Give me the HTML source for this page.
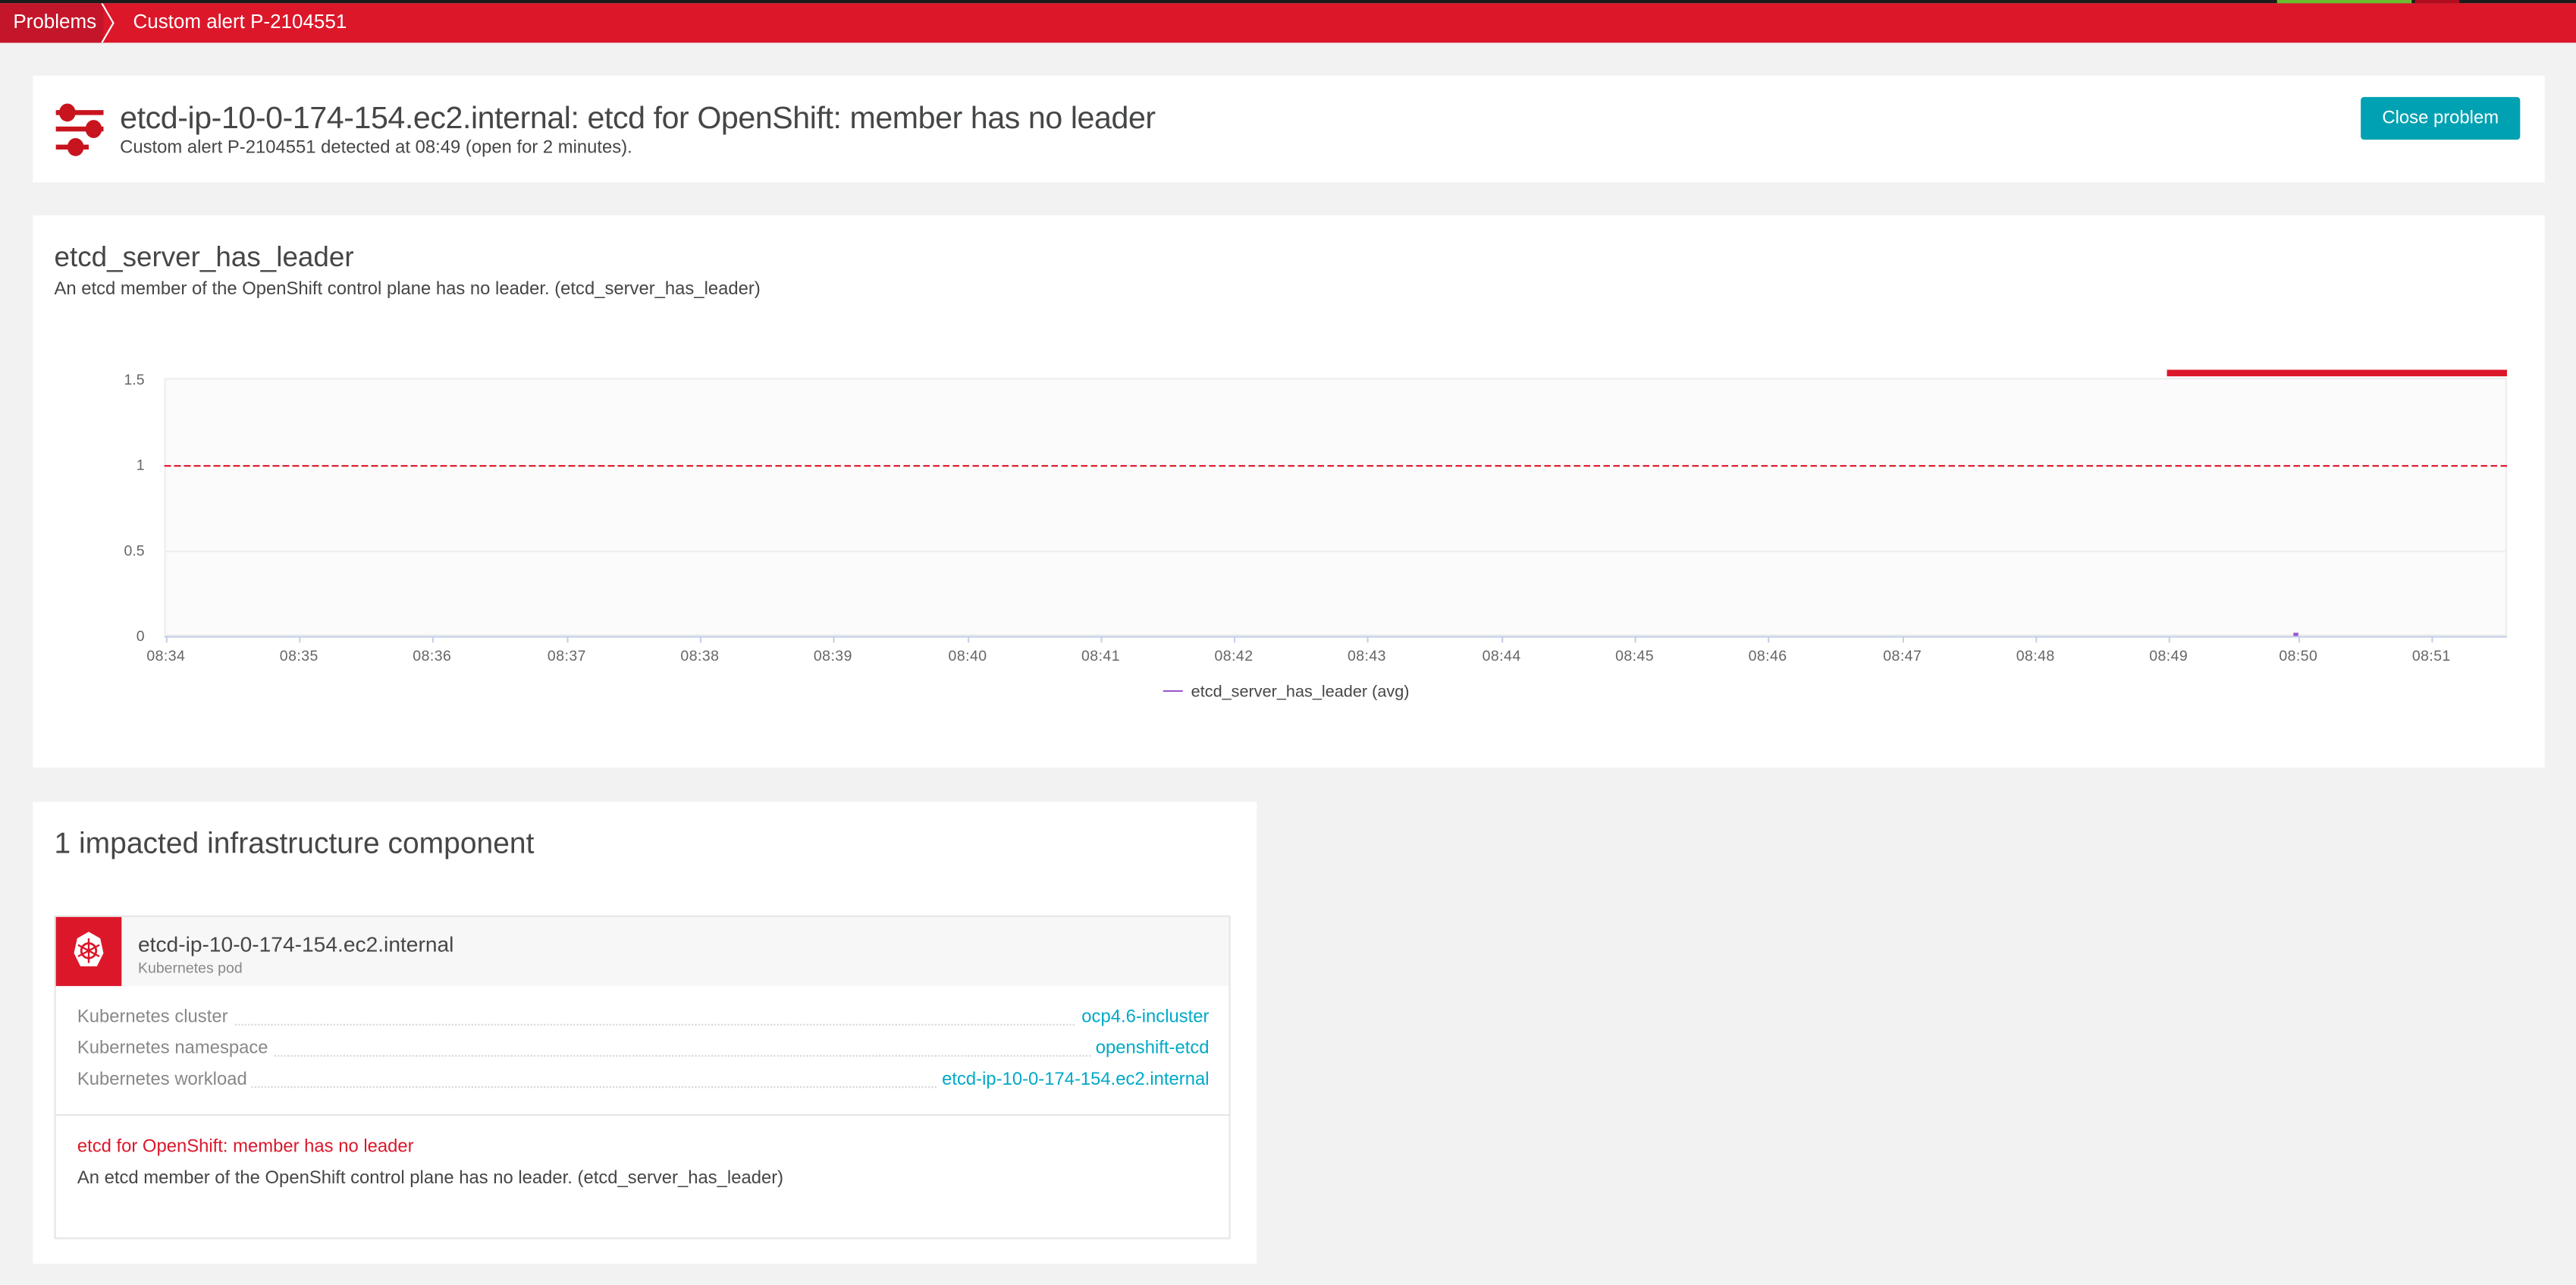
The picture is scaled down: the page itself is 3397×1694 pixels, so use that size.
<!DOCTYPE html>
<html><head><meta charset="utf-8"><style>
html,body{margin:0;padding:0;width:3397px;height:1694px;overflow:hidden;background:#f2f2f2;}
#w{position:absolute;left:0;top:0;width:1568px;height:782px;transform:scale(2.16645);transform-origin:0 0;font-family:"Liberation Sans",sans-serif;color:#454646;background:#f2f2f2;}
.a{position:absolute;white-space:nowrap;}
.card{position:absolute;background:#fff;}
.yl{position:absolute;font-size:9px;color:#666;right:1480px;width:30px;text-align:right;}
.xl{position:absolute;font-size:9px;color:#666;top:394px;width:40px;margin-left:-20px;text-align:center;letter-spacing:.2px;}
.tick{position:absolute;top:387px;width:1px;height:4px;background:#c5d0e6;}
.row{position:absolute;left:47px;width:689px;height:14px;font-size:11px;}
.row .l{position:absolute;left:0;color:#888;background:#fff;padding-right:3px;}
.row .v{position:absolute;right:0;color:#00a9c7;background:#fff;padding-left:3px;}
.row .d{position:absolute;left:0;right:0;top:10px;border-bottom:1px dotted #d8d8d8;}
</style></head><body><div id="w">
<div class="a" style="left:0;top:0;width:1568px;height:2px;background:#1b1b1b"></div>
<div class="a" style="left:0;top:2px;width:1568px;height:24px;background:#dc172a"></div>
<div class="a" style="left:0;top:2px;width:63px;height:24px;background:#c4162a"></div>
<svg class="a" style="left:60px;top:2px" width="12" height="24"><polyline points="2,0 9,12 2,24" fill="none" stroke="#fff" stroke-width="1"/></svg>
<div class="a" style="left:1386px;top:0;width:82px;height:2px;background:#6bbd2f"></div>
<div class="a" style="left:1470px;top:0;width:27px;height:2px;background:#b00e1e"></div>
<div class="a" style="left:8px;top:6px;font-size:12px;color:#fff">Problems</div>
<div class="a" style="left:81px;top:6px;font-size:12px;color:#fff">Custom alert P-2104551</div>

<div class="card" style="left:20px;top:46px;width:1529px;height:65px"></div>
<svg class="a" style="left:32px;top:62px" width="34" height="34">
<rect x="2" y="5" width="29" height="3" fill="#c8141f"/><ellipse cx="9" cy="6.5" rx="5" ry="5.5" fill="#c8141f"/>
<rect x="2" y="15" width="29" height="3" fill="#c8141f"/><ellipse cx="25" cy="16.5" rx="5" ry="5.5" fill="#c8141f"/>
<rect x="2" y="26" width="20" height="3" fill="#c8141f"/><ellipse cx="14" cy="27.5" rx="5" ry="5.5" fill="#c8141f"/>
</svg>
<div class="a" style="left:73px;top:62px;font-size:19px;color:#454646;letter-spacing:-.2px">etcd-ip-10-0-174-154.ec2.internal: etcd for OpenShift: member has no leader</div>
<div class="a" style="left:73px;top:84px;font-size:11px;color:#454646">Custom alert P-2104551 detected at 08:49 (open for 2 minutes).</div>
<div class="a" style="left:1437px;top:59px;width:97px;height:26px;background:#00a1b2;border-radius:2px;color:#fff;font-size:11px;text-align:center;line-height:27px">Close problem</div>

<div class="card" style="left:20px;top:131px;width:1529px;height:336px"></div>
<div class="a" style="left:33px;top:147px;font-size:17px">etcd_server_has_leader</div>
<div class="a" style="left:33px;top:170px;font-size:11px">An etcd member of the OpenShift control plane has no leader. (etcd_server_has_leader)</div>
<div class="a" style="left:100px;top:230px;width:1426px;height:157px;background:#fbfbfb;border:1px solid #eee;box-sizing:border-box"></div>
<div class="a" style="left:100px;top:335px;width:1426px;height:1px;background:#eee"></div>
<div class="a" style="left:100px;top:283px;width:1426px;height:1px;background:repeating-linear-gradient(90deg,#dc172a 0 4px,transparent 4px 6px)"></div>
<div class="a" style="left:1319px;top:225px;width:207px;height:4px;background:#dc172a"></div>
<div class="a" style="left:100px;top:387px;width:1426px;height:1px;background:#c5d0e6"></div>
<div class="a" style="left:1396px;top:385px;width:3px;height:2px;background:#9b59d0"></div>
<div class="yl" style="top:226px">1.5</div><div class="yl" style="top:278px">1</div><div class="yl" style="top:330px">0.5</div><div class="yl" style="top:382px">0</div>
<div class="tick" style="left:101px"></div><div class="xl" style="left:101px">08:34</div>
<div class="tick" style="left:182px"></div><div class="xl" style="left:182px">08:35</div>
<div class="tick" style="left:263px"></div><div class="xl" style="left:263px">08:36</div>
<div class="tick" style="left:345px"></div><div class="xl" style="left:345px">08:37</div>
<div class="tick" style="left:426px"></div><div class="xl" style="left:426px">08:38</div>
<div class="tick" style="left:507px"></div><div class="xl" style="left:507px">08:39</div>
<div class="tick" style="left:589px"></div><div class="xl" style="left:589px">08:40</div>
<div class="tick" style="left:670px"></div><div class="xl" style="left:670px">08:41</div>
<div class="tick" style="left:751px"></div><div class="xl" style="left:751px">08:42</div>
<div class="tick" style="left:832px"></div><div class="xl" style="left:832px">08:43</div>
<div class="tick" style="left:914px"></div><div class="xl" style="left:914px">08:44</div>
<div class="tick" style="left:995px"></div><div class="xl" style="left:995px">08:45</div>
<div class="tick" style="left:1076px"></div><div class="xl" style="left:1076px">08:46</div>
<div class="tick" style="left:1158px"></div><div class="xl" style="left:1158px">08:47</div>
<div class="tick" style="left:1239px"></div><div class="xl" style="left:1239px">08:48</div>
<div class="tick" style="left:1320px"></div><div class="xl" style="left:1320px">08:49</div>
<div class="tick" style="left:1399px"></div><div class="xl" style="left:1399px">08:50</div>
<div class="tick" style="left:1480px"></div><div class="xl" style="left:1480px">08:51</div>
<div class="a" style="left:708px;top:420px;width:12px;height:1px;background:#9b59d0"></div>
<div class="a" style="left:725px;top:416px;font-size:10px;color:#454646">etcd_server_has_leader (avg)</div>

<div class="card" style="left:20px;top:488px;width:745px;height:281px"></div>
<div class="a" style="left:33px;top:503px;font-size:18px">1 impacted infrastructure component</div>
<div class="a" style="left:33px;top:557px;width:716px;height:197px;border:1px solid #e6e6e6;box-sizing:border-box;background:#fff"></div>
<div class="a" style="left:34px;top:558px;width:714px;height:42px;background:#f7f7f7"></div>
<div class="a" style="left:34px;top:558px;width:40px;height:42px;background:#dc172a"></div>
<svg class="a" style="left:44px;top:566px" width="20" height="26" viewBox="0 0 20 26">
<polygon points="10,1 17,5 19,14 15,22 5,22 1,14 3,5" fill="#fff"/>
<circle cx="10" cy="12.5" r="4.5" fill="none" stroke="#dc172a" stroke-width="1.3"/>
<g stroke="#dc172a" stroke-width="1.1"><line x1="10" y1="5" x2="10" y2="20"/><line x1="3.5" y1="9" x2="16.5" y2="16"/><line x1="16.5" y1="9" x2="3.5" y2="16"/></g>
<circle cx="10" cy="12.5" r="1.3" fill="#dc172a"/>
</svg>
<div class="a" style="left:84px;top:567px;font-size:13px;color:#454646">etcd-ip-10-0-174-154.ec2.internal</div>
<div class="a" style="left:84px;top:584px;font-size:9px;color:#888">Kubernetes pod</div>
<div class="row" style="top:613px"><div class="d"></div><span class="l">Kubernetes cluster</span><span class="v">ocp4.6-incluster</span></div>
<div class="row" style="top:632px"><div class="d"></div><span class="l">Kubernetes namespace</span><span class="v">openshift-etcd</span></div>
<div class="row" style="top:651px"><div class="d"></div><span class="l">Kubernetes workload</span><span class="v">etcd-ip-10-0-174-154.ec2.internal</span></div>
<div class="a" style="left:34px;top:678px;width:714px;height:1px;background:#e6e6e6"></div>
<div class="a" style="left:47px;top:692px;font-size:11px;color:#dc172a">etcd for OpenShift: member has no leader</div>
<div class="a" style="left:47px;top:711px;font-size:11px;color:#454646">An etcd member of the OpenShift control plane has no leader. (etcd_server_has_leader)</div>
</div></body></html>
